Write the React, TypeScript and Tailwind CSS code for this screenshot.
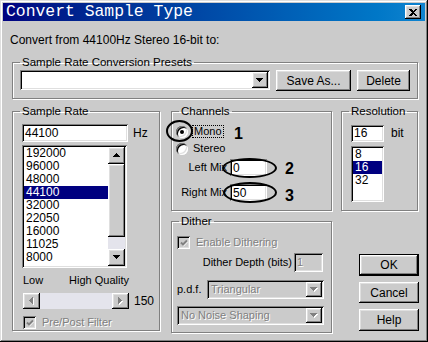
import type { ReactNode } from "react";

const face = "bg-[#cbcbcb]";
const raised =
  "shadow-[inset_-1px_-1px_0_#000,inset_1px_1px_0_#fff,inset_-2px_-2px_0_#808080,inset_2px_2px_0_#dfdfdf]";
const sunken =
  "shadow-[inset_1px_1px_0_#808080,inset_-1px_-1px_0_#fff,inset_2px_2px_0_#000,inset_-2px_-2px_0_#dfdfdf]";
const dim = "text-[#808080] [text-shadow:1px_1px_0_#fff]";

function Arrow({ dir = "down", disabled = false }: { dir?: "up" | "down" | "left" | "right"; disabled?: boolean }) {
  const horiz = dir === "left" || dir === "right";
  const pts = {
    down: "0,0 7,0 3.5,4",
    up: "0,4 7,4 3.5,0",
    left: "4,0 4,7 0,3.5",
    right: "0,0 0,7 4,3.5",
  }[dir];
  return (
    <svg
      width={horiz ? 5 : 8}
      height={horiz ? 8 : 5}
      viewBox={horiz ? "0 0 5 8" : "0 0 8 5"}
      shapeRendering="crispEdges"
    >
      {disabled && <polygon points={pts} fill="#fff" transform="translate(1,1)" />}
      <polygon points={pts} fill={disabled ? "#808080" : "#000"} />
    </svg>
  );
}

function Group({
  title,
  className = "",
  legendClass = "",
  children,
}: {
  title: string;
  className?: string;
  legendClass?: string;
  children?: ReactNode;
}) {
  return (
    <fieldset className={`border border-[#808080] shadow-[inset_1px_1px_0_#fff,1px_1px_0_#fff] ${className}`}>
      <legend className={`ml-[7px] px-[2px] leading-[13px] ${legendClass}`}>{title}</legend>
      {children}
    </fieldset>
  );
}

function Field({ children, className = "", disabled }: { children?: ReactNode; className?: string; disabled?: boolean }) {
  return (
    <div className={`flex items-center pl-[3px] ${sunken} ${disabled ? `${face} ${dim}` : "bg-white"} ${className}`}>
      {children}
    </div>
  );
}

function Combo({ text, className = "", disabled }: { text?: string; className?: string; disabled?: boolean }) {
  return (
    <div className={`flex p-[2px] ${sunken} ${disabled ? face : "bg-white"} ${className}`}>
      <span className={`flex flex-1 items-center pl-[2px] ${disabled ? dim : ""}`}>{text}</span>
      <span className={`flex w-[16px] items-center justify-center ${face} ${raised}`}>
        <Arrow disabled={disabled} />
      </span>
    </div>
  );
}

function Button({ children, className = "", primary }: { children: ReactNode; className?: string; primary?: boolean }) {
  return (
    <button
      type="button"
      className={`flex items-center justify-center text-[12px] ${face} ${raised} ${primary ? "border border-black" : ""} ${className}`}
    >
      {children}
    </button>
  );
}

function Check() {
  return (
    <span className={`flex h-[13px] w-[13px] items-center justify-center ${face} ${sunken}`}>
      <svg width="8" height="8" viewBox="0 0 8 8">
        <path d="M1 3.5L3 5.5L7 1.5" stroke="#fff" strokeWidth="2" fill="none" transform="translate(0.6,0.6)" />
        <path d="M1 3.5L3 5.5L7 1.5" stroke="#808080" strokeWidth="2" fill="none" />
      </svg>
    </span>
  );
}

function Radio({ checked }: { checked?: boolean }) {
  return (
    <span className="flex h-[12px] w-[12px] items-center justify-center rounded-full bg-white shadow-[inset_1px_1px_0_#808080,inset_-1px_-1px_0_#fff,inset_2px_2px_0_#000,inset_-2px_-2px_0_#dfdfdf]">
      {checked && <span className="h-[4px] w-[4px] rounded-full bg-black" />}
    </span>
  );
}

const rates = ["192000", "96000", "48000", "44100", "32000", "22050", "16000", "11025", "8000"];
const bits = ["8", "16", "32"];

export default function App() {
  return (
    <div
      className={`relative flex h-[342px] w-[428px] flex-col overflow-hidden p-[3px] text-[11px] text-black ${face} font-['Liberation_Sans',Arial,sans-serif] shadow-[inset_-1px_-1px_0_#000,inset_1px_1px_0_#dfdfdf,inset_-2px_-2px_0_#808080,inset_2px_2px_0_#fff]`}
    >
      {/* title bar */}
      <div className="flex h-[18px] items-center justify-between bg-linear-to-r from-[#000080] to-[#1084d0] pl-[3px] pr-[4px]">
        <span className="font-['Liberation_Mono',monospace] text-[16.4px] leading-[18px] text-white">
          Convert Sample Type
        </span>
        <span className={`flex h-[14px] w-[16px] items-center justify-center ${face} ${raised}`}>
          <svg width="8" height="7" viewBox="0 0 8 7" shapeRendering="crispEdges">
            <path d="M0 0h2l2 2 2-2h2L5 3.5 8 7H6L4 5 2 7H0l3-3.5z" fill="#000" />
          </svg>
        </span>
      </div>

      <p className="ml-[7px] mt-[13px] text-[12px] leading-[13px]">Convert from 44100Hz Stereo 16-bit to:</p>

      <Group
        title="Sample Rate Conversion Presets"
        legendClass="text-[11.5px]"
        className="ml-[9px] mt-[9px] h-[43px] w-[406px]"
      >
        <div className="ml-[7px] mt-[1px] flex">
          <Combo className="h-[20px] w-[250px]" />
          <Button className="ml-[6px] h-[21px] w-[75px]">Save As...</Button>
          <Button className="ml-[6px] h-[21px] w-[53px]">Delete</Button>
        </div>
      </Group>

      <div className="ml-[9px] mt-[6px] flex">
        {/* sample rate */}
        <Group title="Sample Rate" legendClass="text-[11.5px]" className="h-[226px] w-[148px]">
          <div className="ml-[9px] mt-[6px] flex items-center text-[12px]">
            <Field className="h-[18px] w-[106px]">44100</Field>
            <span className="ml-[5px]">Hz</span>
          </div>
          <div className={`ml-[9px] mt-[3px] flex h-[123px] w-[105px] bg-white p-[2px] text-[12px] ${sunken}`}>
            <div className="flex-1 overflow-hidden leading-[13px]">
              {rates.map((r) => (
                <div key={r} className={`pl-[2px] ${r === "44100" ? "bg-[#000080] text-white" : ""}`}>
                  {r}
                </div>
              ))}
            </div>
            <div className="flex w-[17px] flex-col">
              <span className={`flex h-[17px] items-center justify-center ${face} ${raised}`}>
                <Arrow dir="up" />
              </span>
              <span className={`h-[73px] ${face} ${raised}`} />
              <span className="flex-1 bg-[#e4e4ec]" />
              <span className={`flex h-[17px] items-center justify-center ${face} ${raised}`}>
                <Arrow />
              </span>
            </div>
          </div>
          <div className="ml-[10px] mt-[6px] flex w-[106px] justify-between leading-[13px]">
            <span>Low</span>
            <span>High Quality</span>
          </div>
          <div className="ml-[10px] mt-[5px] flex items-center">
            <div className="flex h-[16px] w-[106px] bg-[#e4e4ec]">
              <span className={`flex w-[17px] items-center justify-center ${face} ${raised}`}>
                <Arrow dir="left" disabled />
              </span>
              <span className="flex-1" />
              <span className={`flex w-[17px] items-center justify-center ${face} ${raised}`}>
                <Arrow dir="right" disabled />
              </span>
            </div>
            <span className="ml-[5px] text-[12px]">150</span>
          </div>
          <div className="ml-[10px] mt-[6px] flex items-center">
            <Check />
            <span className={`ml-[6px] leading-[13px] ${dim}`}>Pre/Post Filter</span>
          </div>
        </Group>

        {/* channels + dither */}
        <div className="ml-[11px] flex w-[161px] flex-col">
          <Group title="Channels" legendClass="text-[11.5px]" className="h-[106px]">
            <div className="ml-[4px] mt-[7px] flex h-[13px] items-center">
              <Radio checked />
              <span className="ml-[4px] border border-dotted border-black px-[1px] leading-[11px]">Mono</span>
            </div>
            <div className="ml-[4px] mt-[4px] flex h-[13px] items-center">
              <Radio />
              <span className="ml-[5px]">Stereo</span>
            </div>
            <div className="mt-[4px] flex items-center">
              <span className="w-[55px] text-right">Left Mix</span>
              <Field className="ml-[3px] h-[17px] w-[37px] text-[12px]">0</Field>
            </div>
            <div className="mt-[8px] flex items-center">
              <span className="w-[55px] text-right">Right Mix</span>
              <Field className="ml-[3px] h-[17px] w-[37px] text-[12px]">50</Field>
            </div>
          </Group>

          <Group title="Dither" legendClass="text-[11.5px]" className="mt-[4px] h-[118px]">
            <div className="ml-[5px] mt-[8px] flex items-center">
              <Check />
              <span className={`ml-[6px] leading-[13px] ${dim}`}>Enable Dithering</span>
            </div>
            <div className="mt-[4px] flex w-[151px] items-center justify-end">
              <span className="mr-[2px]">Dither Depth (bits)</span>
              <Field disabled className="h-[19px] w-[29px]">1</Field>
            </div>
            <div className="ml-[5px] mt-[8px] flex items-center">
              <span className="w-[30px]">p.d.f.</span>
              <Combo disabled text="Triangular" className="h-[19px] w-[117px]" />
            </div>
            <Combo disabled text="No Noise Shaping" className="ml-[5px] mt-[7px] h-[19px] w-[147px]" />
          </Group>
        </div>

        {/* resolution + buttons */}
        <div className="ml-[9px] flex w-[77px] flex-col">
          <Group title="Resolution" legendClass="text-[11.5px]" className="h-[106px]">
            <div className="ml-[9px] mt-[6px] flex items-center text-[12px]">
              <Field className="h-[17px] w-[33px]">16</Field>
              <span className="ml-[7px]">bit</span>
            </div>
            <div className={`ml-[9px] mt-[4px] h-[56px] w-[33px] bg-white p-[2px] text-[12px] leading-[13px] ${sunken}`}>
              {bits.map((b) => (
                <div key={b} className={`pl-[2px] ${b === "16" ? "bg-[#000080] text-white" : ""}`}>
                  {b}
                </div>
              ))}
            </div>
          </Group>
          <Button primary className="ml-[18px] mt-[43px] h-[22px] w-[60px]">OK</Button>
          <Button className="ml-[18px] mt-[6px] h-[21px] w-[60px]">Cancel</Button>
          <Button className="ml-[18px] mt-[6px] h-[22px] w-[60px]">Help</Button>
        </div>
      </div>

      {/* hand-drawn annotations */}
      <span className="absolute left-[166px] top-[120px] h-[22px] w-[27px] rounded-[50%] border-2 border-black" />
      <span className="absolute left-[234px] top-[126px] text-[16px] font-bold leading-none">1</span>
      <span className="absolute left-[222px] top-[158px] h-[20px] w-[55px] rounded-[50%] border-2 border-black" />
      <span className="absolute left-[285px] top-[161px] text-[16px] font-bold leading-none">2</span>
      <span className="absolute left-[223px] top-[182px] h-[21px] w-[54px] rounded-[50%] border-2 border-black" />
      <span className="absolute left-[285px] top-[188px] text-[16px] font-bold leading-none">3</span>
    </div>
  );
}
